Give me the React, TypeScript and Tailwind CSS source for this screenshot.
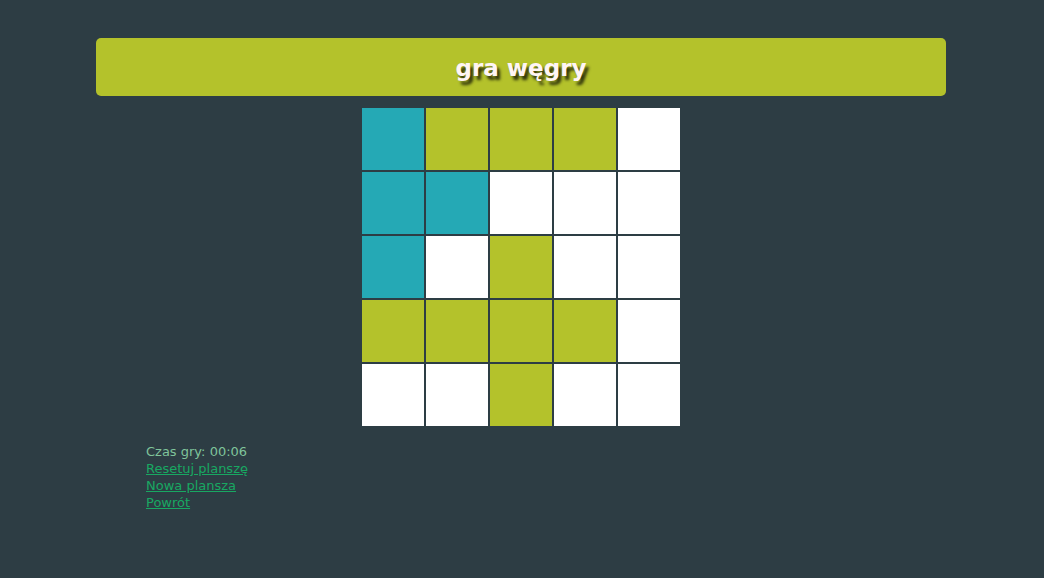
import { useState } from "react";

type Tile = "empty" | "teal" | "lime";

const E: Tile = "empty";
const T: Tile = "teal";
const L: Tile = "lime";

const startBoard: Tile[][] = [
  [T, L, L, L, E],
  [T, T, E, E, E],
  [T, E, L, E, E],
  [L, L, L, L, E],
  [E, E, L, E, E],
];

const tileColor: Record<Tile, string> = {
  empty: "bg-white",
  teal: "bg-[#25a9b5]",
  lime: "bg-[#b4c22b]",
};

const links = [
  { label: "Resetuj planszę", href: "#reset" },
  { label: "Nowa plansza", href: "#nowa" },
  { label: "Powrót", href: "#powrot" },
];

export default function App() {
  const [board, setBoard] = useState(startBoard);

  const toggle = (row: number, col: number) =>
    setBoard((b) =>
      b.map((r, y) =>
        r.map((t, x) => (y === row && x === col ? (t === "empty" ? "lime" : "empty") : t)),
      ),
    );

  return (
    <div className="flex min-h-screen flex-col bg-[#2d3d44] pt-[38px] pr-0.5 font-['Verdana','DejaVu_Sans',sans-serif]">
      <main className="mx-auto w-full max-w-[850px]">
        <header className="rounded-[5px] bg-[#b4c22b] pt-4 pb-3.5">
          <h1 className="text-center text-[23px] leading-7 font-bold text-[#fff5f5] [text-shadow:3px_4px_3px_rgba(0,0,0,0.75)]">
            gra węgry
          </h1>
        </header>
        <div className="mx-auto mt-3 grid w-fit grid-cols-5 gap-0.5">
          {board.map((row, y) =>
            row.map((tile, x) => (
              <button
                key={`${y}-${x}`}
                type="button"
                aria-label={`Pole ${y + 1}, ${x + 1}`}
                onClick={() => toggle(y, x)}
                className={`size-[62px] ${tileColor[tile]}`}
              />
            )),
          )}
        </div>
        <section className="mt-[17px] px-[50px] text-[13px] leading-[17px] text-[#7fc49b]">
          <p>Czas gry: 00:06</p>
          <nav className="flex flex-col items-start">
            {links.map((link) => (
              <a key={link.href} href={link.href} className="text-[#18a862] underline">
                {link.label}
              </a>
            ))}
          </nav>
        </section>
      </main>
    </div>
  );
}
